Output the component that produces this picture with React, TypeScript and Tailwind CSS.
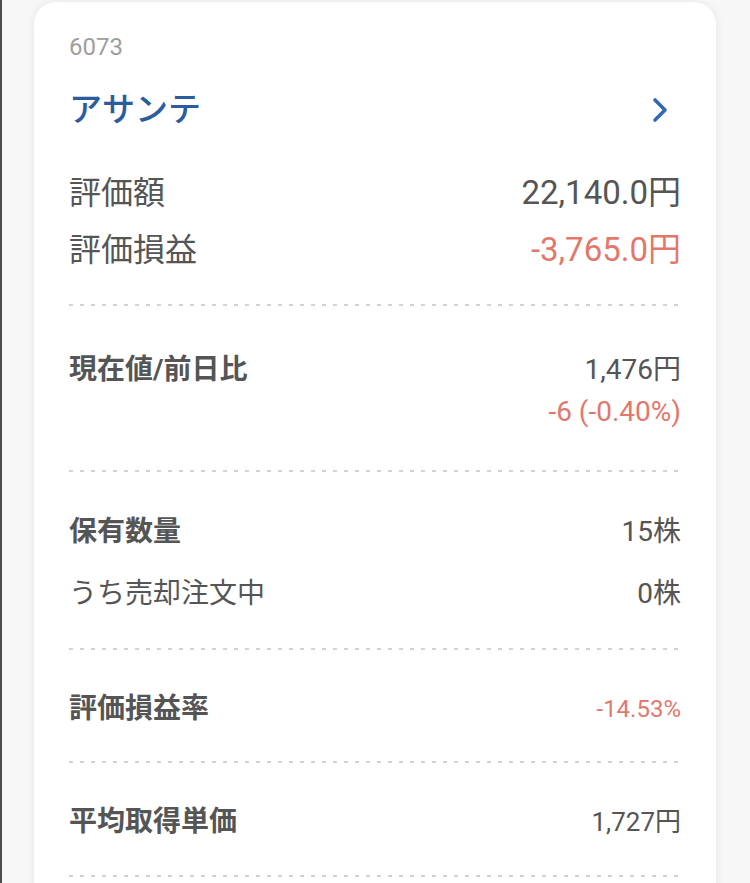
const font = { fontFamily: 'Roboto, "Noto Sans CJK JP", sans-serif' };

function Dots() {
  return <div className="h-[2px] w-full bg-[image:repeating-linear-gradient(to_right,#d2d2d2_0_4px,transparent_4px_11px)]" />;
}

function Row({ label, value, bold, red, size = 'text-[33px]', labelSize = 'text-[28px]' }: { label: string; value: string; bold?: boolean; red?: boolean; size?: string; labelSize?: string }) {
  return (
    <div className="flex h-[56px] items-center justify-between">
      <span className={`${labelSize} text-[#555555] ${bold ? 'font-bold' : ''}`}>{label}</span>
      <span className={`${size} ${red ? 'text-[#e2786c]' : 'text-[#555555]'}`}>{value}</span>
    </div>
  );
}

export default function App() {
  return (
    <div className="h-[883px] overflow-hidden bg-[#f7f7f8] border-l-2 border-[#4d4d4d] pl-[32px] pr-[34px] pt-[2px]" style={font}>
      <div className="bg-white rounded-t-[22px] shadow-[0_0_8px_rgba(0,0,0,0.08)] px-[35px] pt-[31px] pb-[40px]">
        <div className="text-[24px] leading-[28px] text-[#9e9e9e]">6073</div>

        <div className="mt-[24px] flex h-[50px] items-center justify-between">
          <span className="text-[33px] font-medium text-[#2b5c9e]">アサンテ</span>
          <svg width="20" height="28" viewBox="0 0 20 28" className="mr-[11px]">
            <polyline points="5,4 15,14 5,24" fill="none" stroke="#3568b4" strokeWidth="3.6" strokeLinecap="round" strokeLinejoin="round" />
          </svg>
        </div>

        {/* valuation */}
        <div className="mt-[30px] flex flex-col gap-[1px] pb-[26px]">
          <Row label="評価額" value="22,140.0円" labelSize="text-[32px]" />
          <Row label="評価損益" value="-3,765.0円" labelSize="text-[32px]" red />
        </div>
        <Dots />

        {/* price */}
        <div className="flex justify-between pt-[44px] pb-[38px]">
          <span className="text-[28px] leading-[40px] font-bold text-[#555555]">現在値/前日比</span>
          <div className="flex flex-col items-end gap-[2px]">
            <span className="text-[28px] leading-[40px] text-[#555555]">1,476円</span>
            <span className="text-[28px] leading-[40px] text-[#e2786c]">-6 (-0.40%)</span>
          </div>
        </div>
        <Dots />

        {/* quantity */}
        <div className="flex flex-col gap-[6px] pt-[32px] pb-[26px]">
          <Row label="保有数量" value="15株" bold size="text-[28px]" />
          <Row label="うち売却注文中" value="0株" size="text-[28px]" />
        </div>
        <Dots />

        <div className="pt-[31px] pb-[24px]">
          <Row label="評価損益率" value="-14.53%" bold red size="text-[24px]" />
        </div>
        <Dots />

        <div className="pt-[31px] pb-[25px]">
          <Row label="平均取得単価" value="1,727円" bold size="text-[26px]" />
        </div>
        <Dots />
      </div>
    </div>
  );
}
